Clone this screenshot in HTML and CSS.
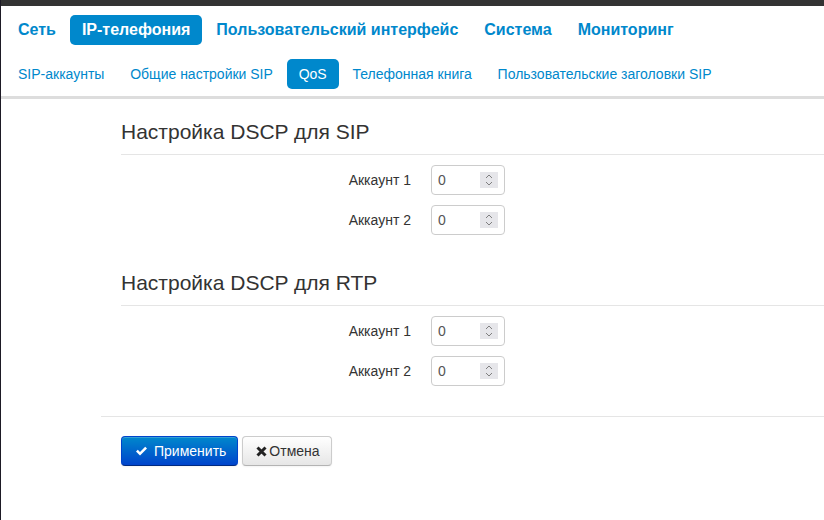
FILE: index.html
```html
<!DOCTYPE html>
<html>
<head>
  <meta charset="UTF-8" />
  <title>QoS</title>
  <link rel="stylesheet" href="styles.css">
</head>
<body>
  <!-- Top dark strip -->
  <div id="topbar"></div>

  <!-- Main menu -->
  <ul class="nav nav-main">
    <li><a href="#">Сеть</a></li>
    <li class="active"><a href="#">IP-телефония</a></li>
    <li><a href="#">Пользовательский интерфейс</a></li>
    <li><a href="#">Система</a></li>
    <li><a href="#">Мониторинг</a></li>
  </ul>

  <!-- Sub menu -->
  <ul class="nav nav-sub">
    <li><a href="#">SIP-аккаунты</a></li>
    <li><a href="#">Общие настройки SIP</a></li>
    <li class="active"><a href="#">QoS</a></li>
    <li><a href="#">Телефонная книга</a></li>
    <li><a href="#">Пользовательские заголовки SIP</a></li>
  </ul>

  <div id="band"></div>

  <div id="page">
    <form class="form-horizontal">
      <div class="section">
        <h3 class="legend">Настройка DSCP для SIP</h3>
        <div class="control-row">
          <label>Аккаунт 1</label>
          <div class="spin-input">
            <input type="text" value="0">
            <span class="spinner"><svg width="18" height="16" viewBox="0 0 18 16"><polyline points="6,6 9,3 12,6" /><polyline points="6,10 9,13 12,10" /></svg></span>
          </div>
        </div>
        <div class="control-row">
          <label>Аккаунт 2</label>
          <div class="spin-input">
            <input type="text" value="0">
            <span class="spinner"><svg width="18" height="16" viewBox="0 0 18 16"><polyline points="6,6 9,3 12,6" /><polyline points="6,10 9,13 12,10" /></svg></span>
          </div>
        </div>
      </div>

      <div class="section">
        <h3 class="legend">Настройка DSCP для RTP</h3>
        <div class="control-row">
          <label>Аккаунт 1</label>
          <div class="spin-input">
            <input type="text" value="0">
            <span class="spinner"><svg width="18" height="16" viewBox="0 0 18 16"><polyline points="6,6 9,3 12,6" /><polyline points="6,10 9,13 12,10" /></svg></span>
          </div>
        </div>
        <div class="control-row">
          <label>Аккаунт 2</label>
          <div class="spin-input">
            <input type="text" value="0">
            <span class="spinner"><svg width="18" height="16" viewBox="0 0 18 16"><polyline points="6,6 9,3 12,6" /><polyline points="6,10 9,13 12,10" /></svg></span>
          </div>
        </div>
      </div>

      <div class="form-actions">
        <button type="button" class="btn btn-primary">
          <svg class="icon" width="13" height="12" viewBox="0 0 13 12"><path d="M1 6.5 L2.8 4.7 L5 6.9 L10.2 1.7 L12 3.5 L5 10.5 Z" fill="#fff"/></svg>
          Применить
        </button>
        <button type="button" class="btn btn-cancel">
          <svg class="icon" width="11" height="11" viewBox="0 0 11 11"><path d="M1.5 1.5 L9.5 9.5 M9.5 1.5 L1.5 9.5" stroke="#222" stroke-width="3"/></svg>
          Отмена
        </button>
      </div>
    </form>
  </div>
</body>
</html>
```

FILE: styles.css
```css
/* Reset & fonts */
* {
  margin: 0;
  padding: 0;
  box-sizing: border-box;
}
body {
  font-family: 'Liberation Sans', Arial, sans-serif;
  font-size: 14px;
  color: #333333;
  background-color: #ffffff;
  border-left: 1px solid #1d1a25;
  height: 100vh;
  overflow: hidden;
}

#topbar {
  height: 6px;
  background-color: #333333;
}

/* Menus (pills) */
.nav {
  list-style: none;
  display: flex;
  margin-left: 5px;
}
.nav li {
  margin-right: 2px;
}
.nav a {
  display: block;
  padding: 5px 12px;
  line-height: 20px;
  color: #0088cc;
  text-decoration: none;
  border-radius: 5px;
  white-space: nowrap;
}
.nav .active a {
  background-color: #0088cc;
  color: #ffffff;
}
.nav-main {
  margin-top: 9px;
}
.nav-main a {
  font-size: 16px;
  font-weight: bold;
}
.nav-sub {
  margin-top: 14px;
}
.nav-sub li {
  margin-right: 1.8px;
}
.nav-sub a {
  font-size: 14px;
}

#band {
  height: 3px;
  margin-top: 7px;
  background-color: #dddddd;
}

/* Content */
#page {
  padding-left: 100px;
}
.section {
  padding-left: 20px;
}
.legend {
  font-size: 21px;
  font-weight: normal;
  line-height: 28px;
  padding-bottom: 8px;
  color: #333333;
  border-bottom: 1px solid #e5e5e5;
  margin-bottom: 10px;
}
.section:first-child .legend {
  margin-top: 19px;
}
.section + .section .legend {
  margin-top: 34px;
}
.control-row {
  display: grid;
  grid-template-columns: 290px 74px;
  column-gap: 20px;
  align-items: center;
  height: 30px;
  margin-bottom: 10px;
}
.control-row label {
  text-align: right;
  font-size: 14px;
  color: #333333;
}
.spin-input {
  display: flex;
  align-items: center;
  height: 30px;
  border: 1px solid #cccccc;
  border-radius: 4px;
  padding: 0 6px 0 6px;
  background: #ffffff;
}
.spin-input input {
  flex: 1;
  width: 0;
  border: none;
  outline: none;
  font-family: 'Liberation Sans', Arial, sans-serif;
  font-size: 14px;
  color: #555555;
  background: transparent;
}
.spinner {
  display: block;
  width: 18px;
  height: 16px;
  background-color: #e6e6ea;
}
.spinner svg {
  display: block;
}
.spinner polyline {
  fill: none;
  stroke: #7f7f7f;
  stroke-width: 1;
}

/* Bottom buttons */
.form-actions {
  margin-top: 30px;
  border-top: 1px solid #e5e5e5;
  padding: 19px 20px 20px;
  display: flex;
  gap: 4px;
}
.btn {
  display: flex;
  align-items: center;
  gap: 6px;
  height: 30px;
  padding: 0 12px 0 13px;
  font-family: 'Liberation Sans', Arial, sans-serif;
  font-size: 14px;
  color: #333333;
  background-image: linear-gradient(to bottom, #ffffff, #e6e6e6);
  border: 1px solid #cccccc;
  border-bottom-color: #b3b3b3;
  border-radius: 4px;
  box-shadow: inset 0 1px 0 rgba(255,255,255,.2), 0 1px 2px rgba(0,0,0,.05);
  cursor: pointer;
}
.btn-cancel {
  gap: 2px;
  padding: 0 11px 0 13px;
}
.btn-primary {
  padding: 0 11px 0 13px;
  color: #ffffff;
  background-image: linear-gradient(to bottom, #0088cc, #0044cc);
  border-color: #0044cc #0044cc #002a80;
}
.icon {
  display: block;
}
```
